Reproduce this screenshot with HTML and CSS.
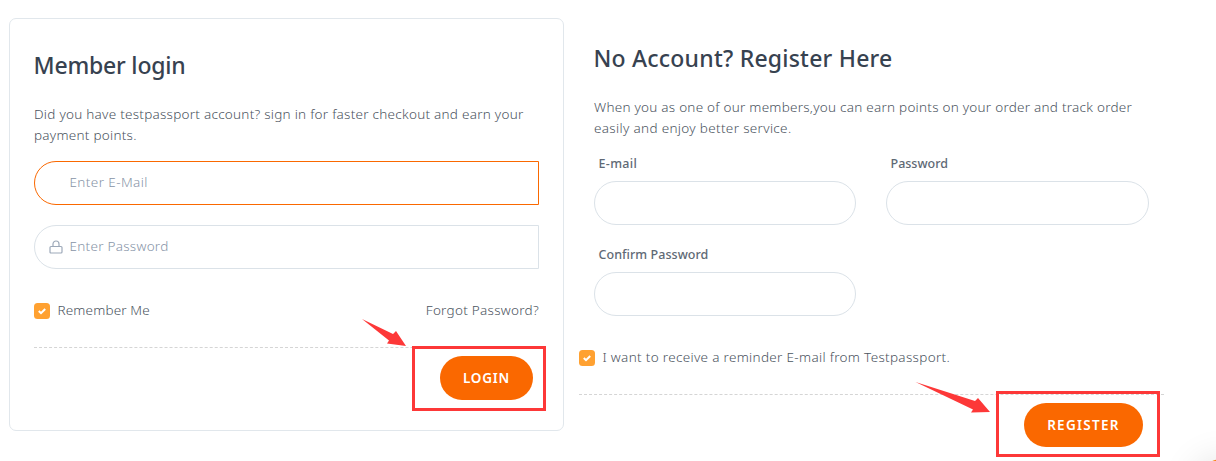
FILE: index.html
```
<!DOCTYPE html>
<html lang="en">
<head>
<meta charset="utf-8">
<title>Login / Register</title>
<link rel="stylesheet" href="styles.css">
</head>
<body>
<main class="page">
  <form class="card">
    <h2 class="title title-login">Member login</h2>
    <p class="intro"><span class="l1">Did you have testpassport account? sign in for faster checkout and earn your</span><br><span class="l2">payment points.</span></p>
    <div class="field field-active"><span class="placeholder ph-mail">Enter E-Mail</span></div>
    <div class="field">
      <svg class="lock" viewBox="0 0 14 14"><path d="M2 6.500h10q1 0 1 1v4.500q0 1-1 1H2q-1 0-1-1V7.500q0-1 1-1zM4 6.500V4a3 3 0 0 1 6 0v2.500"/></svg>
      <span class="placeholder ph-pass">Enter Password</span>
    </div>
    <div class="options">
      <label class="check"><svg class="box" viewBox="0 0 16 16"><rect width="16" height="16" rx="3.500"/><path d="M4.800 8l2.200 2.200 4.200-4.200"/></svg><span class="remember">Remember Me</span></label>
      <a class="forgot">Forgot Password?</a>
    </div>
    <div class="actions actions-login"><button type="button" class="btn btn-login"><span>LOGIN</span></button></div>
  </form>
  <form class="register">
    <div class="inner">
      <h2 class="title title-register">No Account? Register Here</h2>
      <p class="intro"><span class="l3">When you as one of our members,you can earn points on your order and track order</span><br><span class="l4">easily and enjoy better service.</span></p>
      <div class="grid">
        <div><label class="label lb-mail">E-mail</label><div class="pill"></div></div>
        <div><label class="label lb-pass">Password</label><div class="pill"></div></div>
        <div><label class="label lb-confirm">Confirm Password</label><div class="pill"></div></div>
      </div>
    </div>
    <label class="check check-register"><svg class="box" viewBox="0 0 16 16"><rect width="16" height="16" rx="3.500"/><path d="M4.800 8l2.200 2.200 4.200-4.200"/></svg><span class="reminder">I want to receive a reminder E-mail from Testpassport.</span></label>
    <div class="actions actions-register"><button type="button" class="btn btn-register"><span>REGISTER</span></button></div>
  </form>
  <div class="mark mark-login"></div>
  <div class="mark mark-register"></div>
  <svg class="arrows" viewBox="0 0 1216 461"><path d="M362 319L393 334 396 331 406 346 387 343.500 389 340.500Z"/><path d="M915.500 382L975 401 978 398 990 412 971 412.500 973 409.500Z"/></svg>
  <div class="bubble"></div>
</main>
</body>
</html>
```
FILE: styles.css
```
* { box-sizing: border-box; }
body { margin: 0; background: #fff; color: #4b5460; font: 300 13.5px/21px "Noto Sans", sans-serif; }
.page { position: relative; display: flex; gap: 15px; width: 1216px; height: 461px; padding: 18px 0 0 9px; overflow: hidden; }
.card { width: 555px; height: 413px; border: 1px solid #e1e7ec; border-radius: 7px; padding: 31px 24px 0; }
.title { margin: 0; font-size: 23px; line-height: 31px; font-weight: 500; color: #374250; white-space: nowrap; }
.title-login { margin-left: -.5px; letter-spacing: -.2px; }
.title-register { margin-left: -.5px; letter-spacing: .22px; }
.intro { margin: 23px 0 15px; white-space: nowrap; }
.l1, .l2 { letter-spacing: .26px; }
.l3 { letter-spacing: .25px; }
.l4 { letter-spacing: .33px; }
.field { display: flex; align-items: center; height: 44px; margin-bottom: 20px; padding-left: 14px; border: 1px solid #dbe2e8; border-radius: 22px 0 0 22px; }
.field-active { border-color: #fa6800; padding-left: 34.5px; }
.lock { width: 14px; height: 14px; margin-right: 6.5px; fill: none; stroke: #9da9b9; stroke-width: 1.2; }
.placeholder { padding-bottom: 2px; color: #8794a7; white-space: nowrap; }
.ph-mail { letter-spacing: .4px; }
.ph-pass { letter-spacing: .27px; }
.options { display: flex; justify-content: space-between; margin-top: 31px; }
.check { display: flex; align-items: center; gap: 7.5px; height: 22px; white-space: nowrap; }
.check span { padding-bottom: 1px; }
.remember { letter-spacing: .15px; }
.forgot { letter-spacing: .28px; }
.reminder { letter-spacing: .32px; }
.box { width: 16px; height: 16px; fill: #ffa131; flex: none; }
.box path { fill: none; stroke: #fff; stroke-width: 2; }
.actions { display: flex; justify-content: flex-end; border-top: 1px dashed #d5d5d5; }
.actions-login { margin-top: 25px; padding: 8px 6px 0 0; }
.btn { display: flex; align-items: center; justify-content: center; height: 44px; padding: 0; border: 0; border-radius: 22px; background: #fa6800; color: #fff; font: 600 13.5px/20px "Noto Sans", sans-serif; }
.btn-login { width: 93px; letter-spacing: .75px; }
.register { width: 585px; padding-top: 24px; }
.inner { padding: 0 15px; }
.register .title { padding-top: 1px; line-height: 30px; }
.register .intro { margin-top: 24px; }
.grid { display: grid; grid-template-columns: 262px 263px; column-gap: 30px; row-gap: 20px; }
.label { display: block; height: 27px; padding: 1px 0 0 4.5px; color: #606975; font-size: 12.5px; line-height: 18px; font-weight: 500; }
.lb-mail { letter-spacing: .35px; }
.lb-confirm { letter-spacing: .05px; }
.pill { height: 44px; border: 1px solid #dbe2e8; border-radius: 22px; }
.check-register { margin-top: 31px; }
.actions-register { margin-top: 25px; padding: 8px 21px 0 0; }
.btn-register { width: 119px; letter-spacing: 1.3px; }
.mark { position: absolute; border: 3px solid #fd3838; }
.mark-login { left: 412px; top: 346px; width: 134px; height: 65px; }
.mark-register { left: 996px; top: 391px; width: 164px; height: 66px; }
.arrows { position: absolute; left: 0; top: 0; width: 1216px; height: 461px; fill: #fd3838; }
.bubble { position: absolute; left: 1193px; top: 459px; width: 60px; height: 60px; border-radius: 50%; background: #fa8214; box-shadow: 0 0 36px rgba(0, 0, 0, .12); }
```
